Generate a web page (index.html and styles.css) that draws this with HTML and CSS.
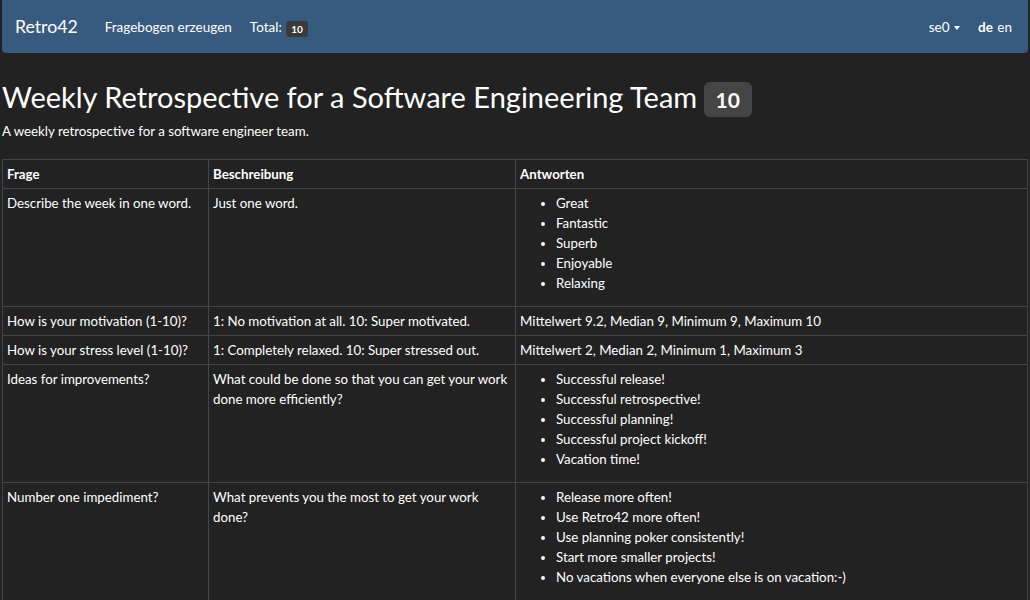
FILE: index.html
```html
<!DOCTYPE html>
<html lang="de">
<head>
<meta charset="utf-8">
<title>Retro42</title>
<link rel="stylesheet" href="styles.css">
</head>
<body>
<div class="page">
  <nav class="navbar">
    <div class="nav-left">
      <a class="brand">Retro42</a>
      <a class="nav-link">Fragebogen erzeugen</a>
      <span class="nav-text">Total: <span class="badge badge-sm">10</span></span>
    </div>
    <div class="nav-right">
      <a class="nav-link">se0 <span class="caret"></span></a>
      <span class="langs"><b>de</b> <a>en</a></span>
    </div>
  </nav>

  <h1 class="title">Weekly Retrospective for a Software Engineering Team <span class="badge badge-lg">10</span></h1>
  <p class="lead">A weekly retrospective for a software engineer team.</p>

  <table class="results">
    <colgroup>
      <col class="c1"><col class="c2"><col class="c3">
    </colgroup>
    <thead>
      <tr><th>Frage</th><th>Beschreibung</th><th>Antworten</th></tr>
    </thead>
    <tbody>
      <tr>
        <td>Describe the week in one word.</td>
        <td>Just one word.</td>
        <td><ul><li>Great</li><li>Fantastic</li><li>Superb</li><li>Enjoyable</li><li>Relaxing</li></ul></td>
      </tr>
      <tr>
        <td>How is your motivation (1-10)?</td>
        <td>1: No motivation at all. 10: Super motivated.</td>
        <td>Mittelwert 9.2, Median 9, Minimum 9, Maximum 10</td>
      </tr>
      <tr>
        <td>How is your stress level (1-10)?</td>
        <td>1: Completely relaxed. 10: Super stressed out.</td>
        <td>Mittelwert 2, Median 2, Minimum 1, Maximum 3</td>
      </tr>
      <tr>
        <td>Ideas for improvements?</td>
        <td>What could be done so that you can get your work done more efficiently?</td>
        <td><ul><li>Successful release!</li><li>Successful retrospective!</li><li>Successful planning!</li><li>Successful project kickoff!</li><li>Vacation time!</li></ul></td>
      </tr>
      <tr>
        <td>Number one impediment?</td>
        <td>What prevents you the most to get your work done?</td>
        <td><ul><li>Release more often!</li><li>Use Retro42 more often!</li><li>Use planning poker consistently!</li><li>Start more smaller projects!</li><li>No vacations when everyone else is on vacation:-)</li></ul></td>
      </tr>
    </tbody>
  </table>
</div>
</body>
</html>
```

FILE: styles.css
```css
html, body {
  margin: 0;
  padding: 0;
  background: #222222;
  color: #ffffff;
  font-family: Lato, "Open Sans", "Liberation Sans", sans-serif;
  font-size: 13.3px;
  line-height: 20px;
}

.page {
  padding: 0 2px;
}

.navbar {
  display: flex;
  justify-content: space-between;
  align-items: center;
  height: 53px;
  background: #375a7f;
  border-radius: 0 0 4px 4px;
  padding: 0 16px 0 13px;
}

.nav-left, .nav-right {
  display: flex;
  align-items: center;
}

.brand {
  font-size: 17.7px;
  color: #ffffff;
  margin-right: 27px;
}

.nav-link, .nav-text {
  color: #ffffff;
  font-size: 13.5px;
}

.nav-left .nav-link {
  margin-right: 18px;
}

.caret {
  display: inline-block;
  width: 0;
  height: 0;
  margin-left: 1px;
  vertical-align: middle;
  border-top: 4px solid #ffffff;
  border-left: 3.5px solid transparent;
  border-right: 3.5px solid transparent;
}

.langs {
  margin-left: 18px;
  font-size: 13.5px;
}

.langs b {
  font-weight: 700;
  margin-right: 1px;
}

.badge {
  display: inline-block;
  font-weight: 700;
  color: #ffffff;
  text-align: center;
  vertical-align: middle;
}

.badge-sm {
  background: #3a3a3a;
  font-size: 10px;
  line-height: 16px;
  padding: 0 5px;
  border-radius: 3px;
  margin-left: 1px;
  position: relative;
  top: 1px;
}

.badge-lg {
  background: #464545;
  font-size: 21px;
  line-height: 35px;
  padding: 0 12px;
  border-radius: 6px;
  margin-left: -1px;
  position: relative;
  top: -1px;
}

.title {
  font-size: 29px;
  font-weight: 400;
  line-height: 40px;
  margin: 0;
  padding-top: 24px;
}

.lead {
  margin: 3px 0 18px;
}

.results {
  width: 100%;
  border-collapse: collapse;
  border: 1px solid #464545;
}

.c1 { width: 206px; }
.c2 { width: 307px; }

.results th, .results td {
  border: 1px solid #464545;
  padding: 4px 4px;
  text-align: left;
  vertical-align: top;
}

.results th {
  font-weight: 700;
}

.results ul {
  margin: 0 0 9px;
  padding-left: 36px;
}
```
